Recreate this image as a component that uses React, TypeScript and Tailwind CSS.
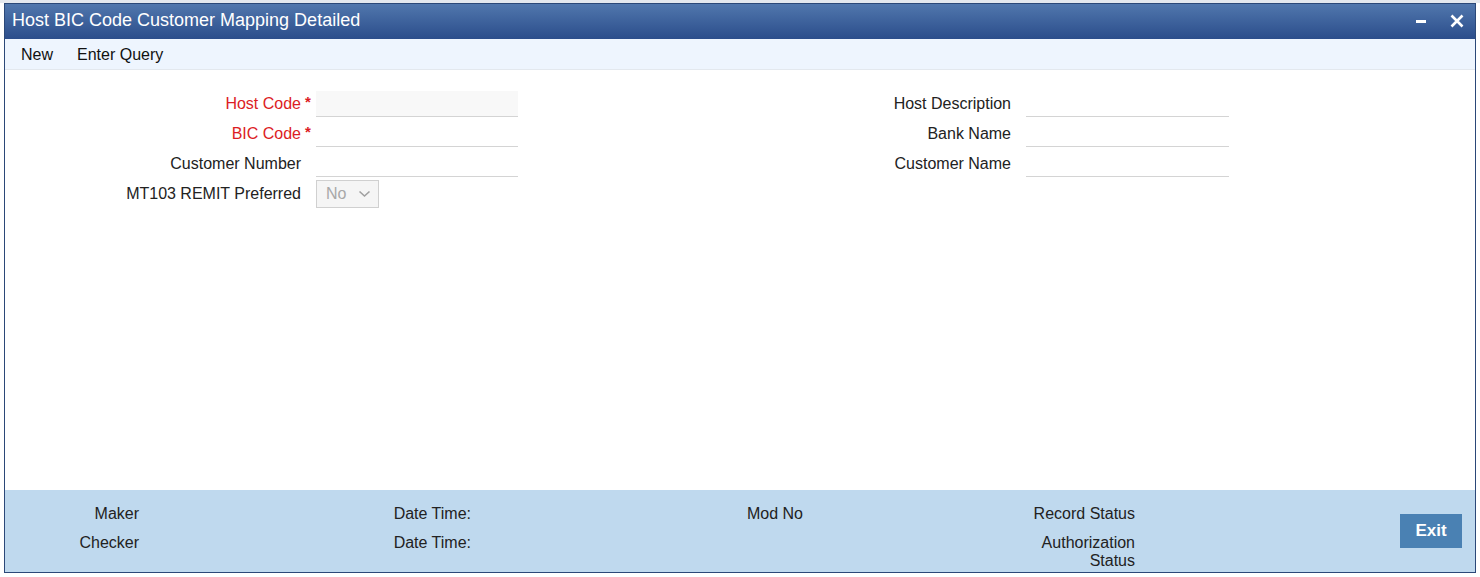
import React from 'react';

const FONT = { fontFamily: '"Liberation Sans", Arial, sans-serif' };

const leftFields = [
  { label: 'Host Code', required: true, readOnly: true },
  { label: 'BIC Code', required: true },
  { label: 'Customer Number' },
];

const rightFields = ['Host Description', 'Bank Name', 'Customer Name'];

const FieldRow: React.FC<{ label: string; required?: boolean; readOnly?: boolean }> = ({
  label,
  required,
  readOnly,
}) => (
  <div className="flex h-[30px] items-center">
    <div className={`w-[296px] text-right ${required ? 'text-[#dc1c24]' : 'text-[#222]'}`}>{label}</div>
    <div className="w-[15px] pl-[4px] text-[#dc1c24] self-start pt-[2px] text-[15px] font-bold">{required ? '*' : ''}</div>
    <div
      className={`h-[26px] w-[202px] border-b border-[#d4d4d4] ${readOnly ? 'bg-[#f8f8f8]' : 'bg-white'}`}
    />
  </div>
);

export default function App() {
  return (
    <div className="h-[577px] w-[1480px] overflow-hidden bg-white text-[16px]" style={FONT}>
      <div className="h-[3px] bg-[#e4e8ee]" />
      <div className="mx-[4px] flex h-[570px] flex-col border border-[#2b4878]">
        {/* title bar */}
        <div className="flex h-[35px] items-center justify-between bg-gradient-to-b from-[#5177ad] to-[#2b4d8b] pb-[3px] pl-[7px] pr-[10px] text-white">
          <span className="text-[18px] leading-none">Host BIC Code Customer Mapping Detailed</span>
          <div className="flex items-center gap-[22px] pt-[2px]">
            <svg width="12" height="12" viewBox="0 0 12 12">
              <rect x="1" y="5" width="10" height="3" fill="white" />
            </svg>
            <svg width="16" height="16" viewBox="0 0 16 16">
              <path d="M2.5 2.5 L13.5 13.5 M13.5 2.5 L2.5 13.5" stroke="white" strokeWidth="2.6" />
            </svg>
          </div>
        </div>

        {/* toolbar */}
        <div className="flex h-[31px] items-center gap-[24px] border-b border-[#e3e8ee] bg-[#eef5fe] pl-[16px] pt-[1px] text-[#111]">
          <span>New</span>
          <span>Enter Query</span>
        </div>

        {/* form */}
        <div className="flex flex-1 pt-[19px]">
          <div className="flex w-[878px] flex-col">
            {leftFields.map((f) => (
              <FieldRow key={f.label} {...f} />
            ))}
            <div className="flex h-[30px] items-center">
              <div className="w-[296px] text-right text-[#222]">MT103 REMIT Preferred</div>
              <div className="w-[15px]" />
              <div className="flex h-[28px] w-[63px] items-center justify-between border border-[#d0d0d0] bg-[#f5f5f5] pl-[9px] pr-[7px] text-[#a8a8a8]">
                <span>No</span>
                <svg width="13" height="8" viewBox="0 0 13 8">
                  <path d="M1.5 1.5 L6.5 6 L11.5 1.5" stroke="#a0a0a0" strokeWidth="1.6" fill="none" />
                </svg>
              </div>
            </div>
          </div>
          <div className="flex flex-col">
            {rightFields.map((l) => (
              <div key={l} className="flex h-[30px] items-center">
                <div className="w-[128px] text-right text-[#222]">{l}</div>
                <div className="w-[15px]" />
                <div className="h-[26px] w-[203px] border-b border-[#d4d4d4]" />
              </div>
            ))}
          </div>
        </div>

        {/* footer */}
        <div className="flex h-[82px] items-center bg-[#bfd9ee] pr-[13px] text-[#222]">
          <div className="flex flex-1 self-start pt-[15px] leading-[18px]">
            <div className="flex w-[332px] flex-col gap-[11px]">
              <div className="w-[134px] text-right">Maker</div>
              <div className="w-[134px] text-right">Checker</div>
            </div>
            <div className="flex w-[332px] flex-col gap-[11px]">
              <div className="w-[134px] text-right">Date Time:</div>
              <div className="w-[134px] text-right">Date Time:</div>
            </div>
            <div className="flex w-[332px] flex-col gap-[11px]">
              <div className="w-[134px] text-right">Mod No</div>
            </div>
            <div className="flex w-[332px] flex-col gap-[11px]">
              <div className="w-[134px] text-right">Record Status</div>
              <div className="ml-[24px] w-[110px] text-right">Authorization Status</div>
            </div>
          </div>
          <button className="h-[34px] w-[62px] bg-[#4a81b3] text-[17px] font-bold text-white">Exit</button>
        </div>
      </div>
    </div>
  );
}
